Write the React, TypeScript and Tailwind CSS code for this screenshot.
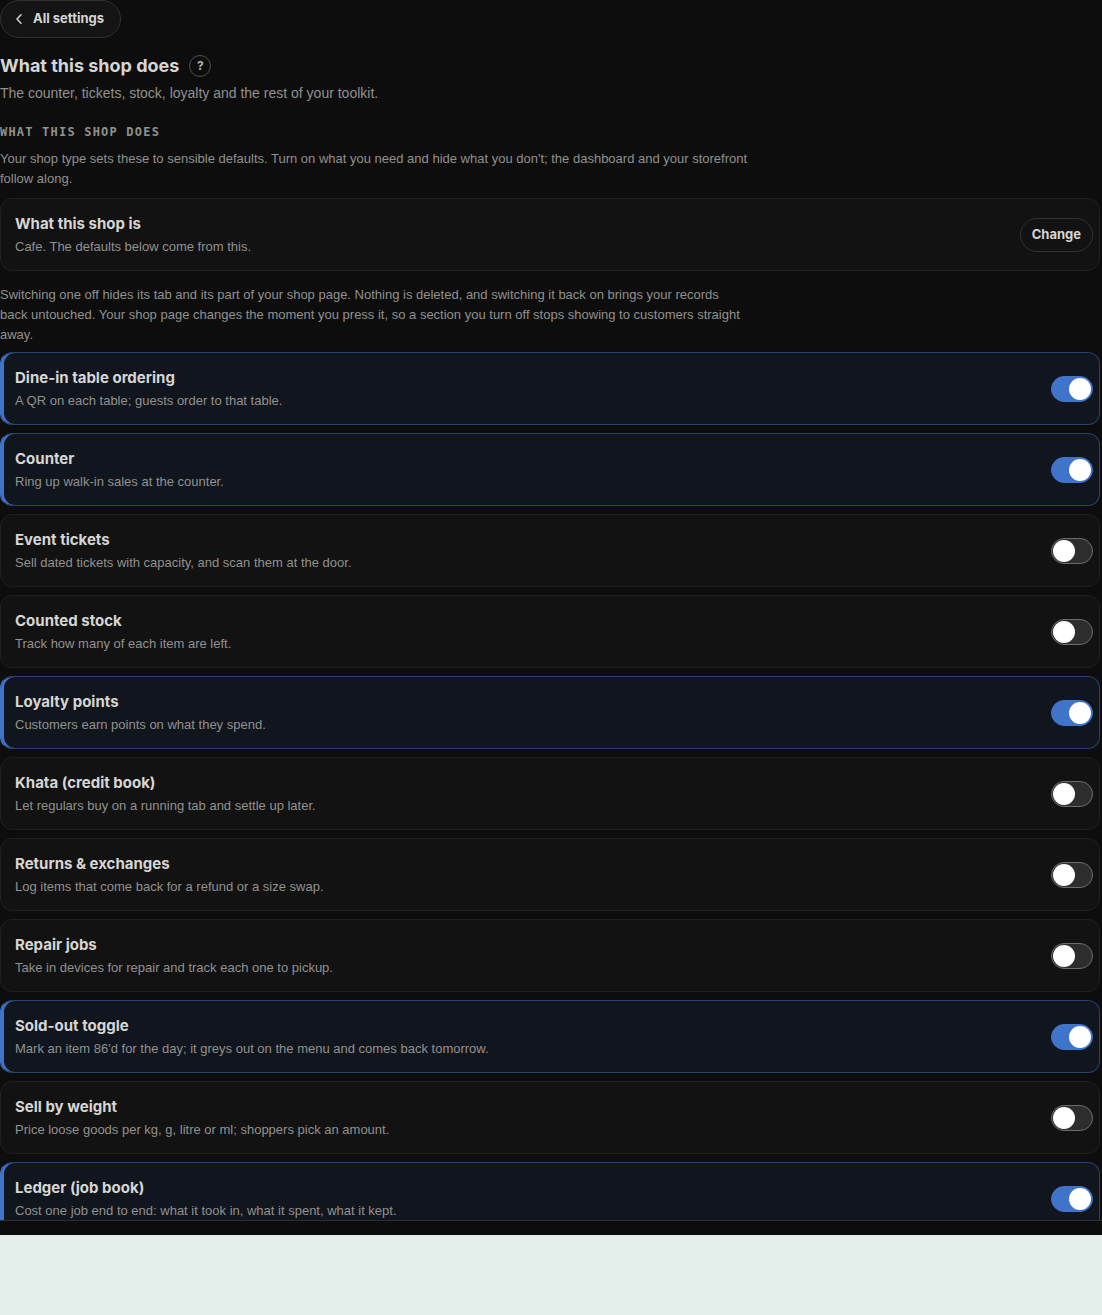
import React, { useState } from "react";

interface Feature {
    id: string;
    title: string;
    description: string;
    enabled: boolean;
}

const initialFeatures: Feature[] = [
    { id: "dine-in", title: "Dine-in table ordering", description: "A QR on each table; guests order to that table.", enabled: true },
    { id: "counter", title: "Counter", description: "Ring up walk-in sales at the counter.", enabled: true },
    { id: "tickets", title: "Event tickets", description: "Sell dated tickets with capacity, and scan them at the door.", enabled: false },
    { id: "stock", title: "Counted stock", description: "Track how many of each item are left.", enabled: false },
    { id: "loyalty", title: "Loyalty points", description: "Customers earn points on what they spend.", enabled: true },
    { id: "khata", title: "Khata (credit book)", description: "Let regulars buy on a running tab and settle up later.", enabled: false },
    { id: "returns", title: "Returns & exchanges", description: "Log items that come back for a refund or a size swap.", enabled: false },
    { id: "repairs", title: "Repair jobs", description: "Take in devices for repair and track each one to pickup.", enabled: false },
    { id: "sold-out", title: "Sold-out toggle", description: "Mark an item 86'd for the day; it greys out on the menu and comes back tomorrow.", enabled: true },
    { id: "weight", title: "Sell by weight", description: "Price loose goods per kg, g, litre or ml; shoppers pick an amount.", enabled: false },
    { id: "ledger", title: "Ledger (job book)", description: "Cost one job end to end: what it took in, what it spent, what it kept.", enabled: true },
];

interface FeatureRowProps {
    feature: Feature;
    onToggle: (id: string) => void;
}

const FeatureRow: React.FC<FeatureRowProps> = ({ feature, onToggle }) => (
    <li
        className={`flex items-center justify-between gap-4 rounded-xl border py-3.5 pr-1.5 pl-3.5 ${
            feature.enabled
                ? "border-[#28436f] border-l-[#4074cb] bg-[#11151d] shadow-[inset_3px_0_0_#4074cb]"
                : "border-[#202020] bg-[#121212]"
        }`}
    >
        <label htmlFor={feature.id} className="flex min-w-0 flex-col gap-[3px]">
            <span className="text-[15px] leading-[21px] font-bold text-[#d6d6d4]">{feature.title}</span>
            <span className="font-['Liberation_Sans',sans-serif] text-[13px] leading-[19px] text-[#91918f]">{feature.description}</span>
        </label>
        <input
            id={feature.id}
            type="checkbox"
            role="switch"
            checked={feature.enabled}
            onChange={() => onToggle(feature.id)}
            className="flex h-[26px] w-[42px] shrink-0 cursor-pointer appearance-none items-center rounded-full border border-[#6c6c6c] bg-[#2d2d2d] px-px before:size-[22px] before:rounded-full before:bg-white checked:justify-end checked:border-[#4074cb] checked:bg-[#4074cb]"
        />
    </li>
);

const App: React.FC = () => {
    const [features, setFeatures] = useState<Feature[]>(initialFeatures);

    const handleToggle = (id: string) => {
        setFeatures((prev) => prev.map((f) => (f.id === id ? { ...f, enabled: !f.enabled } : f)));
    };

    return (
        <div className="flex h-screen flex-col bg-[#e4eeeb] pb-20 font-['Inter','Liberation_Sans',sans-serif]">
            <main className="min-h-0 flex-1 overflow-y-auto bg-[#0d0d0d] pr-0.5 [scrollbar-width:none]">
                <a
                    href="#settings"
                    className="inline-flex h-[38px] items-center gap-2 rounded-full border border-[#303030] bg-[#141414] pr-4 pl-3 text-[13px] font-bold text-[#d6d6d4]"
                >
                    <svg width="12" height="12" viewBox="0 0 12 12" fill="none" stroke="currentColor" strokeWidth="1.5" strokeLinecap="round" strokeLinejoin="round" aria-hidden="true">
                        <path d="M8 1.8 4 6l4 4.2" />
                    </svg>
                    All settings
                </a>

                <header className="mt-4">
                    <div className="flex items-center gap-2.5">
                        <h1 className="text-[18px] leading-6 font-bold text-[#d6d6d4]">What this shop does</h1>
                        <button
                            type="button"
                            aria-label="Help"
                            className="flex size-[22px] items-center justify-center rounded-full border border-[#505050] text-[12px] font-bold text-[#b4b4b2]"
                        >
                            ?
                        </button>
                    </div>
                    <p className="mt-1 font-['Liberation_Sans',sans-serif] text-[14px] leading-[22px] text-[#91918f]">
                        The counter, tickets, stock, loyalty and the rest of your toolkit.
                    </p>
                </header>

                <section className="mt-5">
                    <h2 className="font-['DejaVu_Sans_Mono',monospace] text-[12px] leading-4 font-bold tracking-widest text-[#91918f] uppercase">
                        What this shop does
                    </h2>
                    <p className="mt-[9px] max-w-[748px] font-['Liberation_Sans',sans-serif] text-[13px] leading-5 text-[#91918f]">
                        Your shop type sets these to sensible defaults. Turn on what you need and hide what you don't; the dashboard and your storefront follow along.
                    </p>

                    <div className="mt-[9px] flex items-center justify-between gap-4 rounded-xl border border-[#202020] bg-[#121212] py-3.5 pr-1.5 pl-3.5">
                        <div className="flex min-w-0 flex-col gap-[3px]">
                            <h3 className="text-[15px] leading-[21px] font-bold text-[#d6d6d4]">What this shop is</h3>
                            <p className="font-['Liberation_Sans',sans-serif] text-[13px] leading-[19px] text-[#91918f]">Cafe. The defaults below come from this.</p>
                        </div>
                        <button
                            type="button"
                            className="h-[34px] shrink-0 rounded-full border border-[#303030] px-[11px] text-[13px] font-bold text-[#d6d6d4]"
                        >
                            Change
                        </button>
                    </div>

                    <p className="mt-3.5 max-w-[748px] font-['Liberation_Sans',sans-serif] text-[13px] leading-5 text-[#91918f]">
                        Switching one off hides its tab and its part of your shop page. Nothing is deleted, and switching it back on brings your records back untouched. Your shop page changes the moment you press it, so a section you turn off stops showing to customers straight away.
                    </p>

                    <ul className="mt-[7px] flex flex-col gap-2">
                        {features.map((feature) => (
                            <FeatureRow key={feature.id} feature={feature} onToggle={handleToggle} />
                        ))}
                    </ul>
                </section>
            </main>
            {/* bottom edge of the panel */}
            <div className="h-[15px] shrink-0 border-t border-[#2c2d30] bg-[#0d0d0d]" />
        </div>
    );
};

export default App;
